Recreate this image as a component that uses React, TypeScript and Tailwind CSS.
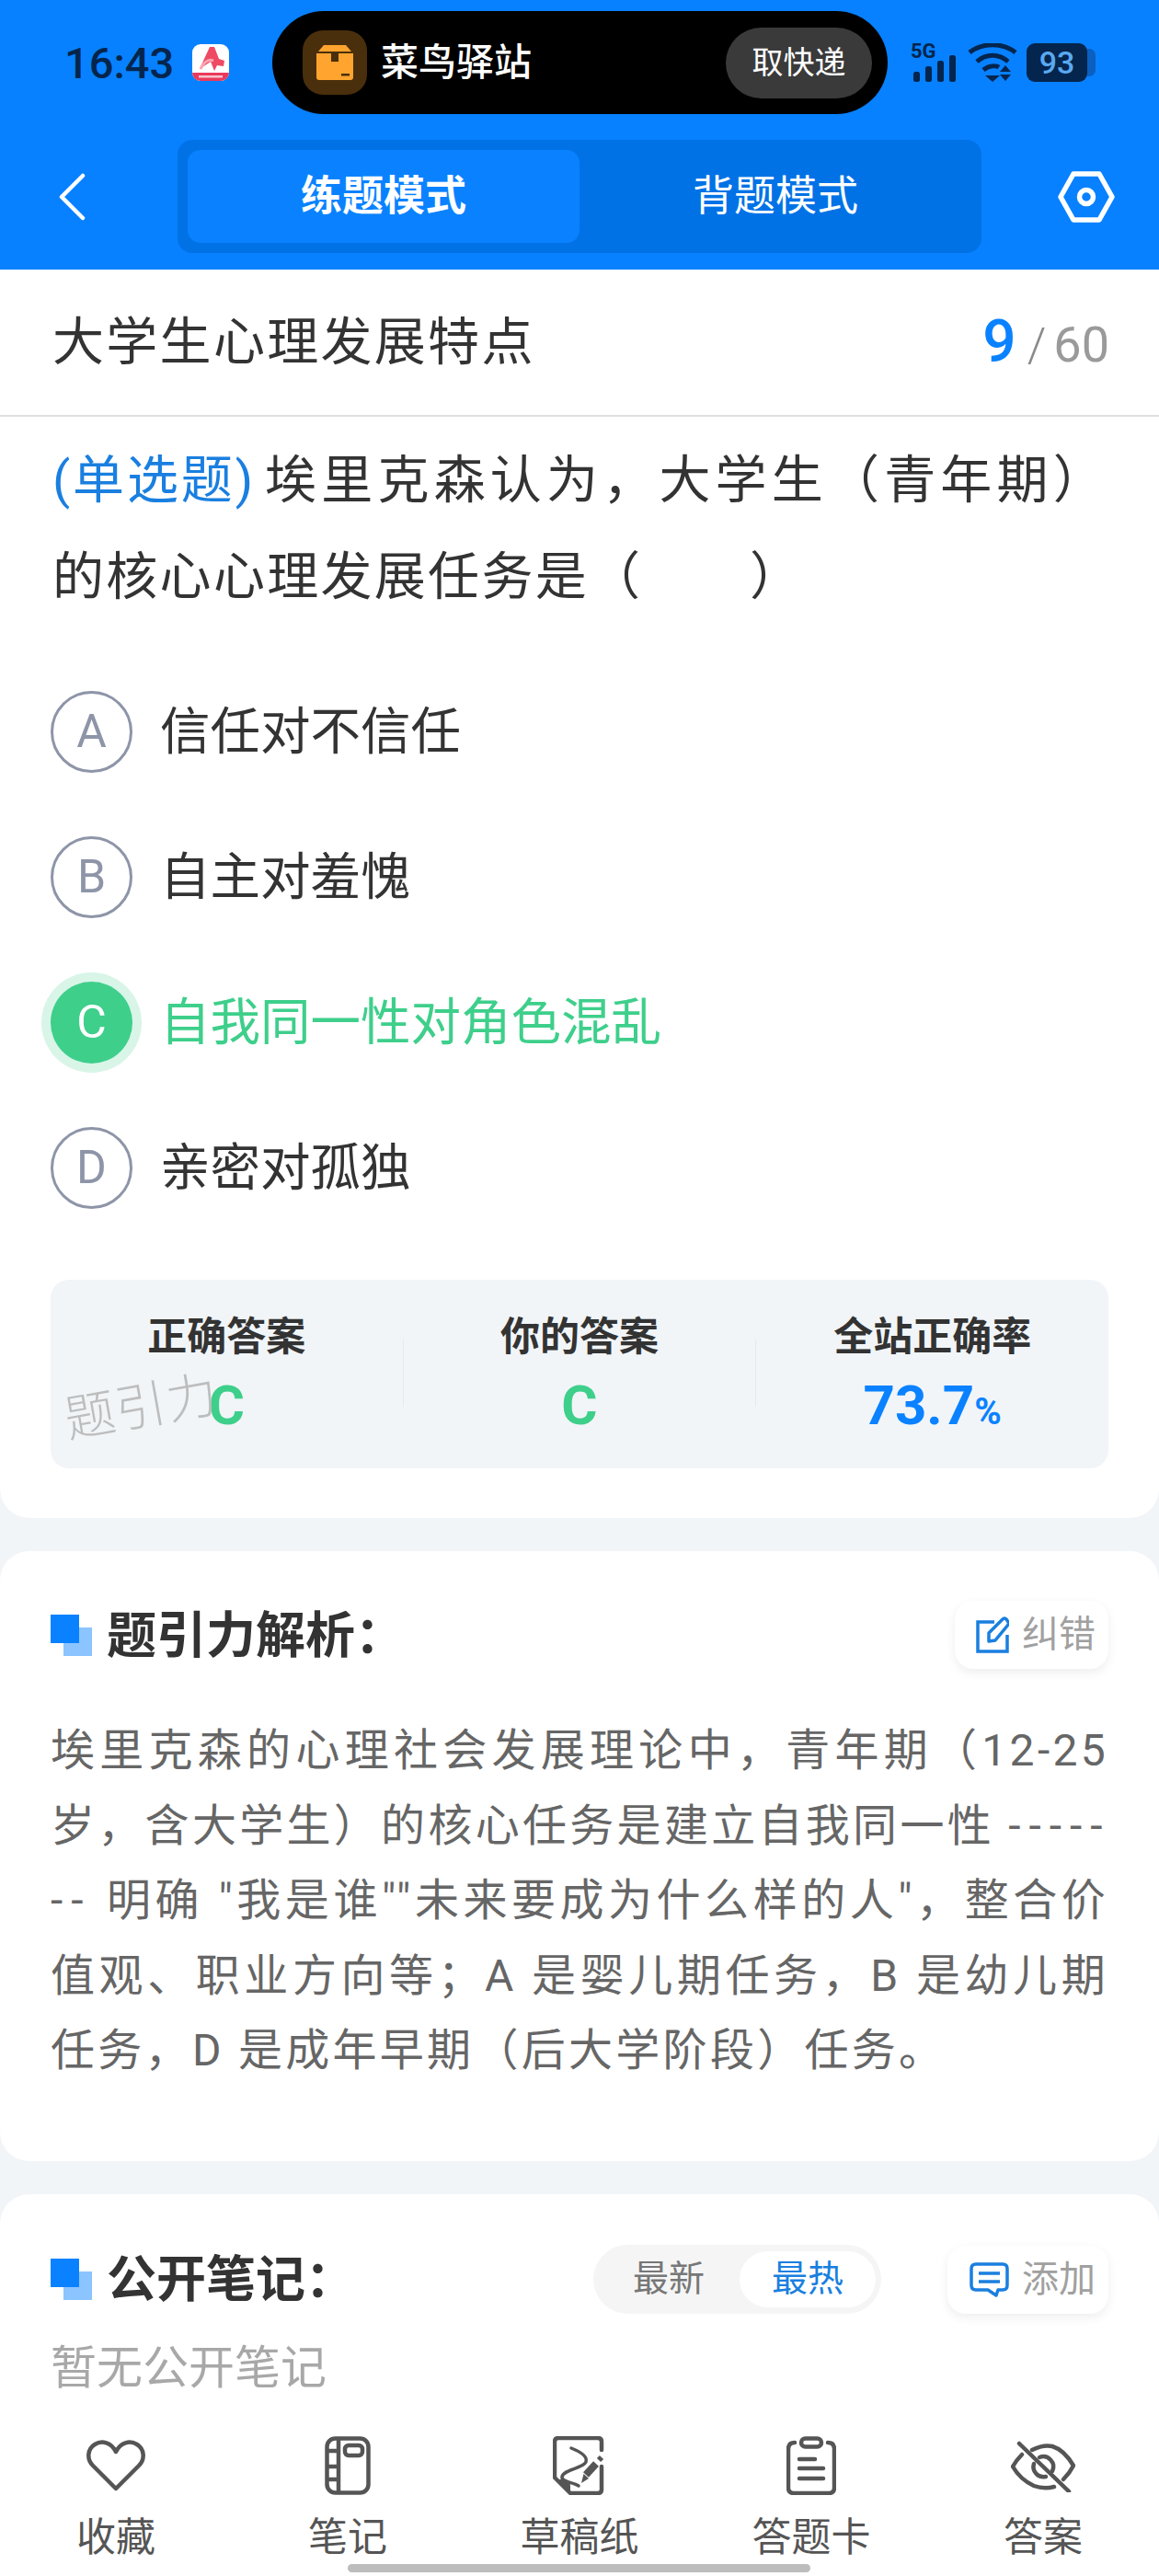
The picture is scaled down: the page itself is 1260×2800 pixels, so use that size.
import React from 'react';

const OPTIONS = [
  { key: 'A', text: '信任对不信任' },
  { key: 'B', text: '自主对羞愧' },
  { key: 'C', text: '自我同一性对角色混乱', correct: true },
  { key: 'D', text: '亲密对孤独' },
];

function AppBadge() {
  return (
    <svg width="40" height="40" viewBox="0 0 40 40" className="shrink-0">
      <rect width="40" height="40" rx="9" fill="#fff" />
      <path d="M0 31H40V31a9 9 0 0 1-9 9H9a9 9 0 0 1-9-9Z" fill="#ea3a5c" />
      <rect x="7" y="34" width="26" height="2.5" fill="#fff" opacity="0.7" />
      <path d="M8 27 19 3h5l5 13 6 2-1 6-7-1-3 6-4-10Z" fill="#ee4a63" />
      <path d="M9 27c4-8 9-11 14-9" stroke="#f8a5b0" strokeWidth="3" fill="none" />
    </svg>
  );
}

function PackageIcon() {
  return (
    <svg width="40" height="38" viewBox="0 0 40 38">
      <path d="M8 0h24l6 7H2Z" fill="#ffa42e" />
      <path d="M0 9h16v9h8V9h16v26a3 3 0 0 1-3 3H3a3 3 0 0 1-3-3Z" fill="#ffa42e" />
      <rect x="27" y="31" width="9" height="2.5" fill="#4a2f0c" />
    </svg>
  );
}

function StatusIcons() {
  return (
    <div className="ml-[25px] flex items-center text-[#04254d]">
      <svg width="52" height="44" viewBox="0 0 52 44" className="mr-[10px]">
        <text x="0" y="17" fontSize="22" fontWeight="700" fill="#04254d" fontFamily="Roboto, sans-serif">5G</text>
        <rect x="3" y="32" width="7" height="11" rx="2.5" fill="#04254d" />
        <rect x="16" y="26" width="7" height="17" rx="2.5" fill="#04254d" />
        <rect x="29" y="20" width="7" height="23" rx="2.5" fill="#04254d" />
        <rect x="42" y="14" width="7" height="29" rx="2.5" fill="#04254d" />
      </svg>
      <svg width="54" height="42" viewBox="0 0 54 42" className="mr-[10px]">
        <path d="M2 10C16-1 38-1 52 10" stroke="#04254d" strokeWidth="5" fill="none" />
        <path d="M10 20C20 11 34 11 44 20" stroke="#04254d" strokeWidth="5" fill="none" />
        <path d="M17 29C23 24 31 24 34 26" stroke="#04254d" strokeWidth="5" fill="none" />
        <path d="M19 35H35L27 42Z" fill="#04254d" />
        <path d="M41 24 47 31H35Z" fill="#04254d" />
        <path d="M35 34H47L41 41Z" fill="#04254d" />
      </svg>
      <div className="flex items-center">
        <div className="flex h-[42px] w-[66px] items-center justify-center rounded-[9px] bg-[#04254d] text-[34px] font-medium leading-none text-[#5aa9f0]">
          93
        </div>
        <div className="h-[30px] w-[9px] rounded-r-[7px] bg-[#0a5fc0]" />
      </div>
    </div>
  );
}

function HexSettings() {
  return (
    <svg width="62" height="56" viewBox="0 0 62 56" fill="none" stroke="#fff" strokeWidth="5.5">
      <path d="M17 3H45L59 28 45 53H17L3 28Z" strokeLinejoin="round" />
      <circle cx="31" cy="28" r="7.5" />
    </svg>
  );
}

function BackArrow() {
  return (
    <svg width="30" height="52" viewBox="0 0 30 52" fill="none" stroke="#fff" strokeWidth="4.5" strokeLinecap="round" strokeLinejoin="round">
      <path d="M27 3 4 26 27 49" />
    </svg>
  );
}

function SectionTitle({ title }: { title: string }) {
  return (
    <div className="flex items-center">
      <div className="relative h-[45px] w-[45px] shrink-0">
        <div className="absolute bottom-0 right-0 h-[31px] w-[31px] bg-[#8cc4ff]" />
        <div className="absolute left-0 top-0 h-[31px] w-[31px] bg-[#0a82ff]" />
      </div>
      <span className="ml-[16px] pt-[3px] text-[54px] font-bold leading-none text-[#333]">{title}</span>
    </div>
  );
}

function ToolButton({ icon, label, className }: { icon: React.ReactNode; label: string; className: string }) {
  return (
    <div className={`flex h-[74px] items-center justify-end gap-[14px] rounded-[20px] bg-white pr-[14px] shadow-[0_4px_12px_rgba(0,0,0,0.07)] ${className}`}>
      {icon}
      <span className="text-[40px] leading-none text-[#a0a0a0]">{label}</span>
    </div>
  );
}

const NAV_STROKE = { fill: 'none', stroke: '#555', strokeWidth: 4.5, strokeLinecap: 'round', strokeLinejoin: 'round' } as const;

const NAV_ITEMS: { label: string; icon: React.ReactNode }[] = [
  {
    label: '收藏',
    icon: (
      <svg width="64" height="56" viewBox="0 0 64 56" {...NAV_STROKE}>
        <path d="M32 53 7 28C0 21 1 10 9 5c8-5 18-2 23 8C37 3 47 0 55 5c8 5 9 16 2 23Z" />
      </svg>
    ),
  },
  {
    label: '笔记',
    icon: (
      <svg width="50" height="64" viewBox="0 0 50 64" {...NAV_STROKE}>
        <rect x="2.5" y="2.5" width="45" height="59" rx="9" />
        <path d="M15 3V61M3 16H15M3 33H15M3 47H15" />
        <rect x="22" y="10" width="19" height="11" rx="4" />
      </svg>
    ),
  },
  {
    label: '草稿纸',
    icon: (
      <svg width="58" height="64" viewBox="0 0 58 64" {...NAV_STROKE}>
        <path d="M53 15V6Q53 2 49 2H6Q2 2 2 6V45L19 62H49Q53 62 53 58V33" />
        <path d="M3 47H12Q19 47 19 54V61Z" fill="#555" stroke="none" />
        <path d="M20 13C30 17 38 22 36 28 33 35 12 36 10 44 9 50 22 50 28 54" strokeWidth="3.5" />
        <path d="M36 42 47 30" strokeWidth="8" strokeLinecap="butt" />
        <path d="M31 51 33.5 41 39 46Z" fill="#555" stroke="none" />
        <path d="M50 26 53 23" strokeWidth="6" strokeLinecap="butt" />
      </svg>
    ),
  },
  {
    label: '答题卡',
    icon: (
      <svg width="54" height="64" viewBox="0 0 54 64" {...NAV_STROKE}>
        <path d="M9 7Q2 7 2 14V56Q2 62 8 62H46Q52 62 52 56V14Q52 7 45 7" />
        <rect x="16" y="2.5" width="22" height="9" rx="4.5" />
        <path d="M14 25H31M14 35H40M14 46H40" />
      </svg>
    ),
  },
  {
    label: '答案',
    icon: (
      <svg width="70" height="58" viewBox="10 8 70 58" {...NAV_STROKE}>
        <path d="M19 13 73 65" />
        <path d="M33 20Q45 14 55 16 68 20 78 37 74 45 67 52" />
        <path d="M22 25Q16 31 12 38 20 52 35 59 46 63 57 60" />
        <path d="M41 28A11 11 0 0 1 55 43" />
        <path d="M35 35A11 11 0 0 0 48 49" />
      </svg>
    ),
  },
];

export default function App() {
  return (
    <div className="relative flex h-[2800px] w-[1260px] flex-col overflow-hidden bg-[#f2f5f8] font-['Roboto','Noto_Sans_CJK_SC',sans-serif] text-[#333]">
      {/* status bar + mode switch */}
      <header className="h-[293px] shrink-0 bg-[#0781ff] pt-3">
        <div className="flex h-[112px] items-center pl-[70px]">
          <span className="w-[117px] text-[47px] font-medium leading-none text-[#04254d]">16:43</span>
          <div className="ml-[22px]">
            <AppBadge />
          </div>
          <div className="ml-[47px] flex h-[112px] w-[669px] items-center rounded-full bg-black pl-[33px] pr-[17px]">
            <div className="flex h-[70px] w-[70px] items-center justify-center rounded-[22px] bg-[#4a2f0c]">
              <PackageIcon />
            </div>
            <span className="ml-[15px] text-[41px] font-medium leading-none text-white">菜鸟驿站</span>
            <div className="ml-auto flex h-[77px] w-[159px] items-center justify-center rounded-full bg-[#3a3a3a] text-[34px] leading-none text-white">
              取快递
            </div>
          </div>
          <StatusIcons />
        </div>
        <div className="mt-7 flex h-[123px] items-center">
          <div className="flex w-[193px] pl-[63px]">
            <BackArrow />
          </div>
          <div className="flex h-[123px] w-[874px] rounded-[16px] bg-[#0072e6] p-[11px]">
            <div className="flex flex-1 items-center justify-center rounded-[14px] bg-[#0a82ff] text-[45px] font-bold leading-none text-white">
              练题模式
            </div>
            <div className="flex flex-1 items-center justify-center text-[45px] font-normal leading-none text-white">
              背题模式
            </div>
          </div>
          <div className="ml-[83px]">
            <HexSettings />
          </div>
        </div>
      </header>

      {/* question card */}
      <section className="h-[1357px] shrink-0 rounded-b-[32px] bg-white">
        <div className="flex h-[160px] items-center justify-between border-b-2 border-[#dfdfdf] pl-[57px] pr-[54px]">
          <h1 className="text-[56px] font-normal leading-none tracking-[2.3px] text-[#333]">大学生心理发展特点</h1>
          <div className="flex items-baseline leading-none">
            <span className="text-[64px] font-medium text-[#0a82ff]">9</span>
            <span className="ml-[12px] text-[52px] font-light text-[#8a8a8a]">/</span>
            <span className="ml-[8px] text-[54px] text-[#9a9a9a]">60</span>
          </div>
        </div>

        <div className="px-[57px] pt-[17px] text-[56px] leading-[105px] tracking-[2.3px]">
          <div className="[text-align-last:justify]">
            <span className="mr-[10px] tracking-normal text-[#1a7fe0]">(单选题)</span>埃里克森认为，大学生（青年期）
          </div>
          <div>的核心心理发展任务是（　　）</div>
        </div>

        <div className="mt-[36px] pl-[55px]">
          {OPTIONS.map((o) =>
            o.correct ? (
              <div key={o.key} className="flex h-[158px] items-center">
                <div className="flex h-[89px] w-[89px] items-center justify-center rounded-full bg-[#3ecf8b] text-[50px] leading-none text-white shadow-[0_0_0_10px_rgba(62,207,139,0.2)]">
                  {o.key}
                </div>
                <span className="ml-[30px] text-[54.5px] leading-none text-[#3ecf8b]">{o.text}</span>
              </div>
            ) : (
              <div key={o.key} className="flex h-[158px] items-center">
                <div className="flex h-[89px] w-[89px] items-center justify-center rounded-full border-[3px] border-[#8e95a8] text-[50px] leading-none text-[#8e95a8]">
                  {o.key}
                </div>
                <span className="ml-[30px] text-[54.5px] leading-none text-[#333]">{o.text}</span>
              </div>
            ),
          )}
        </div>

        <div className="relative mx-[55px] mt-[43px] grid h-[205px] grid-cols-[1fr_1px_1fr_1px_1fr] rounded-[20px] bg-[#f1f5f8]">
          <div className="flex flex-col items-center pt-[38px]">
            <span className="text-[43px] font-bold leading-[48px] text-[#333]">正确答案</span>
            <span className="mt-[18px] text-[60px] font-bold leading-[66px] text-[#3ecf8b]">C</span>
          </div>
          <div className="mt-[65px] h-[73px] bg-[#e6e8ec]" />
          <div className="flex flex-col items-center pt-[38px]">
            <span className="text-[43px] font-bold leading-[48px] text-[#333]">你的答案</span>
            <span className="mt-[18px] text-[60px] font-bold leading-[66px] text-[#3ecf8b]">C</span>
          </div>
          <div className="mt-[65px] h-[73px] bg-[#e6e8ec]" />
          <div className="flex flex-col items-center pt-[38px]">
            <span className="text-[43px] font-bold leading-[48px] text-[#333]">全站正确率</span>
            <span className="mt-[18px] text-[60px] font-bold leading-[66px] text-[#0a82ff]">
              73.7<span className="text-[40px]">%</span>
            </span>
          </div>
          <span className="absolute left-[16px] top-[126px] origin-left -rotate-[10deg] text-[55px] font-light leading-none tracking-[1px] text-[#bdbdbd]">
            题引力
          </span>
        </div>
      </section>

      {/* analysis card */}
      <section className="mt-9 h-[663px] shrink-0 rounded-[32px] bg-white px-[55px] pt-[54px]">
        <div className="flex items-center justify-between">
          <SectionTitle title="题引力解析：" />
          <ToolButton
            className="w-[167px]"
            label="纠错"
            icon={
              <svg width="36" height="40" viewBox="0 0 36 40" fill="none" stroke="#1a7fe0" strokeWidth="3.5">
                <path d="M20 6H2V38H34V20" />
                <path d="M14 27V18L29 3Q31 1 33 3L35 6Q36 8 35 9L21 26Z" strokeLinejoin="round" />
              </svg>
            }
          />
        </div>
        <div className="mt-[48px] text-[48px] leading-[81.6px] tracking-[3.3px] text-[#666]">
          <div className="whitespace-nowrap [text-align-last:justify]">埃里克森的心理社会发展理论中，青年期（12-25</div>
          <div className="whitespace-nowrap [text-align-last:justify]">
            岁，含大学生）的核心任务是建立自我同一性 <span className="tracking-[9px]">-----</span>
          </div>
          <div className="whitespace-nowrap [text-align-last:justify]">
            <span className="tracking-[9px]">--</span> 明确 "我是谁""未来要成为什么样的人"，整合价
          </div>
          <div className="whitespace-nowrap [text-align-last:justify]">值观、职业方向等；A 是婴儿期任务，B 是幼儿期</div>
          <div>任务，D 是成年早期（后大学阶段）任务。</div>
        </div>
      </section>

      {/* public notes card */}
      <section className="mt-[36px] flex-1 rounded-t-[32px] bg-white px-[55px] pt-[55px]">
        <div className="flex items-center">
          <SectionTitle title="公开笔记：" />
          <div className="ml-auto flex h-[75px] w-[313px] items-center rounded-full bg-[#f5f5f5] pl-[43px] pr-[6px]">
            <span className="text-[39px] leading-none text-[#777]">最新</span>
            <div className="ml-auto flex h-[61px] w-[148px] items-center justify-center rounded-full bg-white text-[39px] leading-none text-[#1a7fe0]">
              最热
            </div>
          </div>
          <ToolButton
            className="ml-[72px] w-[175px]"
            label="添加"
            icon={
              <svg width="43" height="38" viewBox="0 0 43 38" fill="none" stroke="#1a7fe0" strokeWidth="3.5" strokeLinejoin="round">
                <path d="M7 2H36Q41 2 41 7V25Q41 30 36 30H31L29 36 20 30H7Q2 30 2 25V7Q2 2 7 2Z" />
                <path d="M10 12H33M10 21H33" />
              </svg>
            }
          />
        </div>
        <p className="mt-[29px] text-[50px] leading-[60px] text-[#a8a8a8]">暂无公开笔记</p>
      </section>

      {/* bottom toolbar */}
      <nav className="grid h-[170px] shrink-0 grid-cols-5 bg-white">
        {NAV_ITEMS.map((item) => (
          <div key={item.label} className="flex flex-col items-center pt-[18px]">
            <div className="flex h-[64px] items-center justify-center">{item.icon}</div>
            <span className="mt-[22px] text-[43px] leading-[48px] text-[#555]">{item.label}</span>
          </div>
        ))}
      </nav>
      <div className="absolute bottom-[4px] left-[378px] h-[9px] w-[503px] rounded-full bg-[#bdbdbd]" />
    </div>
  );
}
